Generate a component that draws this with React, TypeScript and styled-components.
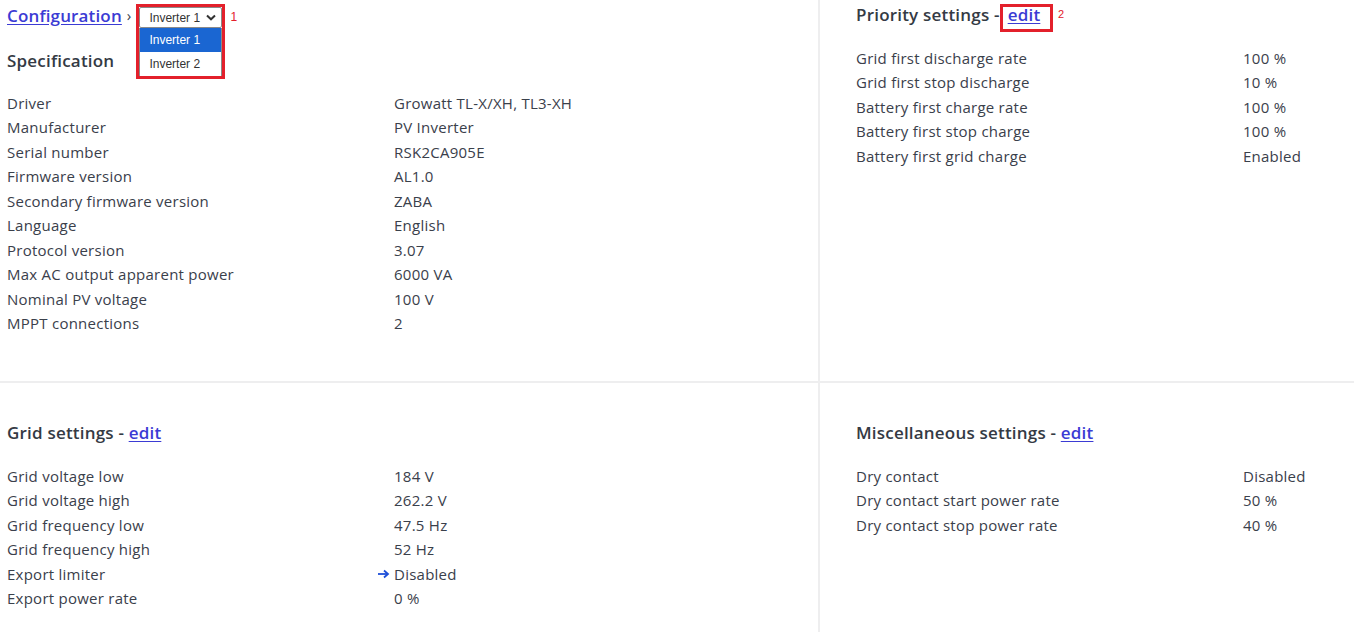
import React from "react";
import styled, { createGlobalStyle } from "styled-components";

const GlobalStyle = createGlobalStyle`
  html, body {
    margin: 0;
    padding: 0;
    background: #ffffff;
  }
  body {
    font-family: "Open Sans", "Noto Sans", sans-serif;
    color: #3a404b;
  }
`;

const Page = styled.div`
  display: grid;
  grid-template-columns: 820px 1fr;
  grid-template-rows: 383px 1fr;
  min-height: 100vh;
`;

const Panel = styled.section<{ $right?: boolean; $bottom?: boolean }>`
  padding: ${(p) => (p.$bottom ? "38px" : "3px")} 0 0 ${(p) => (p.$right ? "36px" : "7px")};
  border-right: ${(p) => (p.$right ? "none" : "2px solid #eeeeef")};
  border-bottom: ${(p) => (p.$bottom ? "none" : "2px solid #eeeeef")};
`;

const Breadcrumb = styled.div`
  display: flex;
  align-items: center;
  height: 24px;
  margin-bottom: 22px;
`;

const CrumbLink = styled.a`
  font-size: 17px;
  font-weight: 600;
  letter-spacing: 0.15px;
  color: #3b3bd4;
  text-decoration: underline;
  text-underline-offset: 2px;
  cursor: pointer;
`;

const CrumbSep = styled.span`
  font-size: 15px;
  margin: 0 8px 0 5px;
  color: #3a404b;
`;

const SelectWrap = styled.div`
  position: relative;
  width: 83px;
  height: 21px;
  margin-top: 5px;
  font-family: "Liberation Sans", Arial, sans-serif;
  font-size: 12px;
`;

const SelectBox = styled.div`
  box-sizing: border-box;
  height: 21px;
  display: flex;
  align-items: center;
  justify-content: space-between;
  padding: 0 5px 0 9px;
  border: 1px solid #8a8a8a;
  border-radius: 2px;
  background: #fff;
  color: #333;
`;

const DropList = styled.ul`
  position: absolute;
  top: 21px;
  left: 0;
  width: 100%;
  box-sizing: border-box;
  margin: 0;
  padding: 0;
  list-style: none;
  background: #fff;
  border: 1px solid #8a8a8a;
  border-top: none;
`;

const DropItem = styled.li<{ $active?: boolean }>`
  height: 24px;
  display: flex;
  align-items: center;
  padding-left: 9px;
  background: ${(p) => (p.$active ? "#1a66d2" : "#fff")};
  color: ${(p) => (p.$active ? "#fff" : "#333")};
`;

const RedFrame = styled.div`
  position: absolute;
  top: -3px;
  left: -3px;
  width: 89px;
  height: 75px;
  box-sizing: border-box;
  border: 3px solid #e3202b;
  pointer-events: none;
`;

const Marker = styled.span<{ $small?: boolean }>`
  position: absolute;
  color: #e3202b;
  font-family: "Liberation Sans", Arial, sans-serif;
  font-size: ${(p) => (p.$small ? "11px" : "12px")};
  font-weight: 400;
  line-height: 12px;
  text-decoration: none;
`;

const SelectMarker = styled(Marker)`
  left: 91px;
  top: 4px;
`;

const Heading = styled.h2<{ $gap?: number }>`
  margin: 0 0 ${(p) => p.$gap ?? 19}px;
  height: 24px;
  line-height: 24px;
  font-size: 17px;
  font-weight: 600;
  letter-spacing: 0.2px;
  color: #343a44;
  white-space: nowrap;
`;

const EditLink = styled.a<{ $framed?: boolean }>`
  position: relative;
  display: inline-block;
  margin-left: ${(p) => (p.$framed ? "8px" : "0")};
  color: #3b3bd4;
  text-decoration: underline;
  text-underline-offset: 2px;
  cursor: pointer;
`;

const EditFrame = styled.span`
  position: absolute;
  left: -8px;
  right: -13px;
  top: 1px;
  bottom: -5px;
  border: 3px solid #e3202b;
  pointer-events: none;
`;

const EditMarker = styled(Marker)`
  right: -24px;
  top: 5px;
`;

const Table = styled.div`
  display: grid;
  grid-template-columns: 387px 1fr;
  font-size: 15px;
  letter-spacing: 0.25px;
  line-height: 24.45px;
`;

const Label = styled.div`
  color: #3a404b;
`;

const Value = styled.div`
  display: flex;
  align-items: center;
  color: #3a404b;
  white-space: nowrap;
`;

const Arrow = styled.svg`
  width: 13px;
  height: 10px;
  margin-left: -17px;
  margin-right: 4px;
  flex-shrink: 0;
`;

type Row = [string, string, boolean?];

const spec: Row[] = [
  ["Driver", "Growatt TL-X/XH, TL3-XH"],
  ["Manufacturer", "PV Inverter"],
  ["Serial number", "RSK2CA905E"],
  ["Firmware version", "AL1.0"],
  ["Secondary firmware version", "ZABA"],
  ["Language", "English"],
  ["Protocol version", "3.07"],
  ["Max AC output apparent power", "6000 VA"],
  ["Nominal PV voltage", "100 V"],
  ["MPPT connections", "2"],
];

const priority: Row[] = [
  ["Grid first discharge rate", "100 %"],
  ["Grid first stop discharge", "10 %"],
  ["Battery first charge rate", "100 %"],
  ["Battery first stop charge", "100 %"],
  ["Battery first grid charge", "Enabled"],
];

const grid: Row[] = [
  ["Grid voltage low", "184 V"],
  ["Grid voltage high", "262.2 V"],
  ["Grid frequency low", "47.5 Hz"],
  ["Grid frequency high", "52 Hz"],
  ["Export limiter", "Disabled", true],
  ["Export power rate", "0 %"],
];

const misc: Row[] = [
  ["Dry contact", "Disabled"],
  ["Dry contact start power rate", "50 %"],
  ["Dry contact stop power rate", "40 %"],
];

function LinkArrow() {
  return (
    <Arrow viewBox="0 0 13 10">
      <path d="M1 5 H11" stroke="#1d4fd8" strokeWidth="1.8" />
      <path d="M7 1.5 L11 5 L7 8.5" fill="none" stroke="#1d4fd8" strokeWidth="1.8" />
    </Arrow>
  );
}

function InfoTable({ rows }: { rows: Row[] }) {
  return (
    <Table>
      {rows.map(([label, value, linked]) => (
        <React.Fragment key={label}>
          <Label>{label}</Label>
          <Value>
            {linked && <LinkArrow />}
            {value}
          </Value>
        </React.Fragment>
      ))}
    </Table>
  );
}

function Chevron() {
  return (
    <svg width="10" height="7" viewBox="0 0 10 7">
      <path d="M1 1.5 L5 5.3 L9 1.5" fill="none" stroke="#333" strokeWidth="2" />
    </svg>
  );
}

export default function App() {
  return (
    <>
      <GlobalStyle />
      <Page>
        <Panel>
          <Breadcrumb>
            <CrumbLink>Configuration</CrumbLink>
            <CrumbSep>›</CrumbSep>
            <SelectWrap>
              <SelectBox>
                <span>Inverter 1</span>
                <Chevron />
              </SelectBox>
              <DropList>
                <DropItem $active>Inverter 1</DropItem>
                <DropItem>Inverter 2</DropItem>
              </DropList>
              <RedFrame />
              <SelectMarker>1</SelectMarker>
            </SelectWrap>
          </Breadcrumb>
          <Heading $gap={18}>Specification</Heading>
          <InfoTable rows={spec} />
        </Panel>
        <Panel $right>
          <Heading>
            Priority settings -
            <EditLink $framed>
              edit
              <EditFrame />
              <EditMarker $small>2</EditMarker>
            </EditLink>
          </Heading>
          <InfoTable rows={priority} />
        </Panel>
        <Panel $bottom>
          <Heading>
            Grid settings - <EditLink>edit</EditLink>
          </Heading>
          <InfoTable rows={grid} />
        </Panel>
        <Panel $right $bottom>
          <Heading>
            Miscellaneous settings - <EditLink>edit</EditLink>
          </Heading>
          <InfoTable rows={misc} />
        </Panel>
      </Page>
    </>
  );
}
